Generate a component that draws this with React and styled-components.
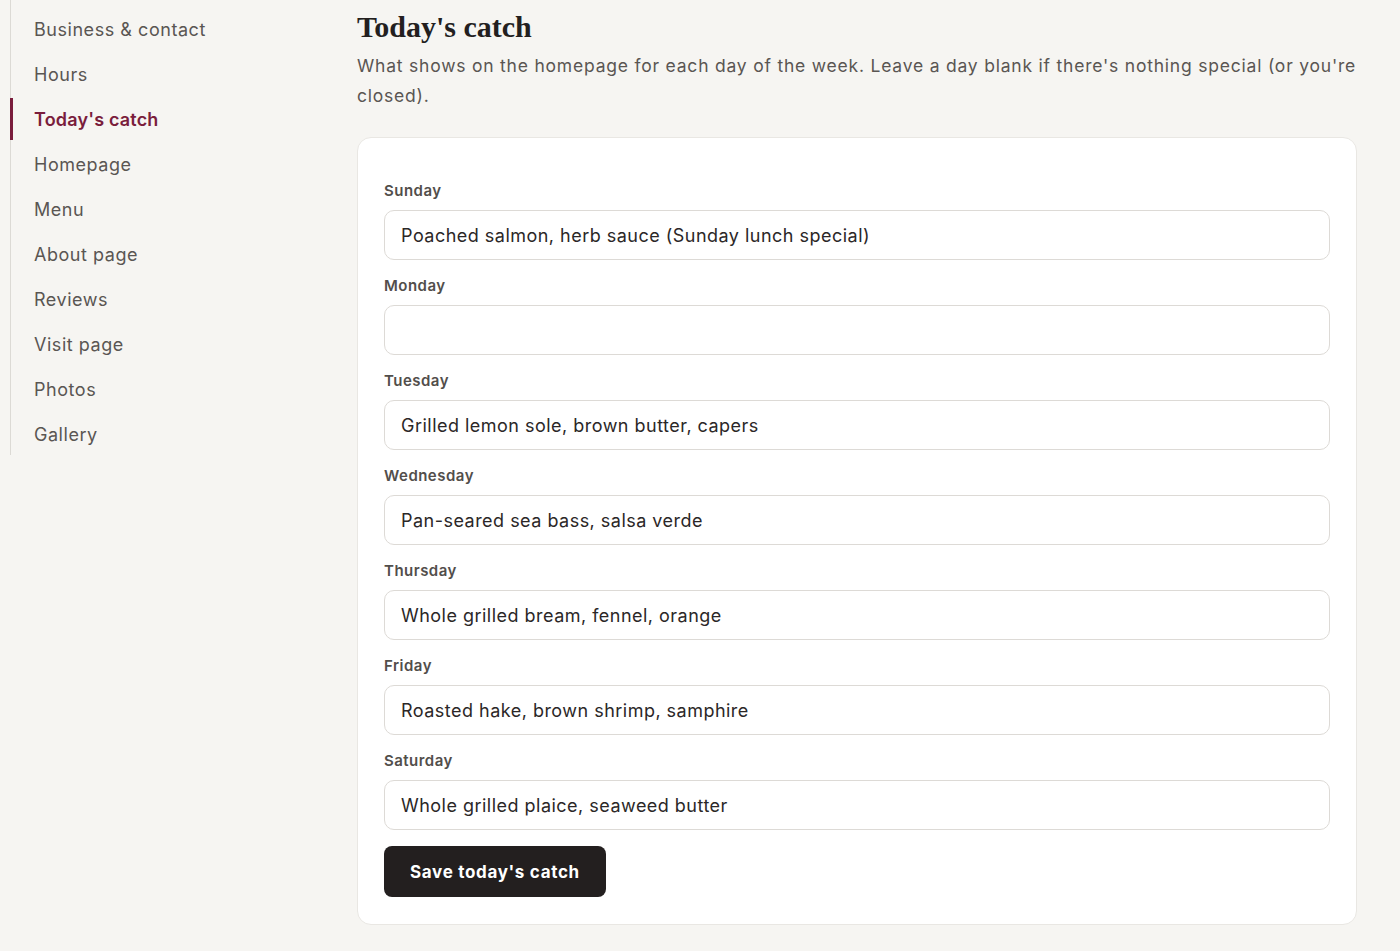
import React from "react";
import styled, { createGlobalStyle } from "styled-components";

const GlobalStyle = createGlobalStyle`
  * { box-sizing: border-box; }
  body {
    margin: 0;
    background: #f6f5f2;
    font-family: Inter, "Open Sans", "Liberation Sans", sans-serif;
    letter-spacing: 0.03em;
    color: #2b2727;
  }
`;

const sections = [
  "Business & contact",
  "Hours",
  "Today's catch",
  "Homepage",
  "Menu",
  "About page",
  "Reviews",
  "Visit page",
  "Photos",
  "Gallery",
];

const days = [
  ["Sunday", "Poached salmon, herb sauce (Sunday lunch special)"],
  ["Monday", ""],
  ["Tuesday", "Grilled lemon sole, brown butter, capers"],
  ["Wednesday", "Pan-seared sea bass, salsa verde"],
  ["Thursday", "Whole grilled bream, fennel, orange"],
  ["Friday", "Roasted hake, brown shrimp, samphire"],
  ["Saturday", "Whole grilled plaice, seaweed butter"],
];

function App() {
  return (
    <>
      <GlobalStyle />
      <Layout>
        <SideNav>
          {sections.map((s) => (
            <NavItem key={s} $active={s === "Today's catch"}>
              {s}
            </NavItem>
          ))}
        </SideNav>
        <Main>
          <Title>Today's catch</Title>
          <Lead>
            What shows on the homepage for each day of the week. Leave a day blank if there's
            nothing special (or you're closed).
          </Lead>
          <Card>
            {days.map(([day, dish]) => (
              <Field key={day}>
                <Label htmlFor={day}>{day}</Label>
                <Input id={day} defaultValue={dish} />
              </Field>
            ))}
            <SaveButton>Save today's catch</SaveButton>
          </Card>
        </Main>
      </Layout>
    </>
  );
}

const Layout = styled.div`
  display: grid;
  grid-template-columns: 300px 1fr;
  column-gap: 47px;
  padding: 0 43px 27px 10px;
  align-items: start;
`;

const SideNav = styled.nav`
  display: flex;
  flex-direction: column;
  gap: 3px;
  padding-top: 8px;
  border-left: 1px solid #dcdad5;
`;

const NavItem = styled.a`
  display: flex;
  align-items: center;
  height: 42px;
  margin-left: -1px;
  padding-left: 21px;
  border-left: 3px solid ${(p) => (p.$active ? "#7a1d3c" : "transparent")};
  font-size: 18px;
  font-weight: ${(p) => (p.$active ? 600 : 400)};
  letter-spacing: ${(p) => (p.$active ? "0.01em" : "0.03em")};
  color: ${(p) => (p.$active ? "#7a1d3c" : "#5a5653")};
  cursor: pointer;
`;

const Main = styled.main`
  display: flex;
  flex-direction: column;
`;

const Title = styled.h1`
  margin: 8px 0 0;
  font-family: "Liberation Serif", "DejaVu Serif", serif;
  font-size: 30px;
  font-weight: 700;
  line-height: 38px;
  letter-spacing: 0;
  color: #231f1f;
`;

const Lead = styled.p`
  margin: 5px 0 26px;
  font-size: 17.5px;
  line-height: 30px;
  letter-spacing: 0.045em;
  color: #5a5653;
`;

const Card = styled.form`
  display: flex;
  flex-direction: column;
  gap: 16px;
  padding: 43px 26px 27px;
  background: #fff;
  border: 1px solid #e9e7e3;
  border-radius: 14px;
`;

const Field = styled.div`
  display: flex;
  flex-direction: column;
  gap: 9px;
`;

const Label = styled.label`
  font-size: 15px;
  font-weight: 600;
  line-height: 20px;
  color: #524e4b;
`;

const Input = styled.input`
  height: 50px;
  padding: 0 16px;
  border: 1px solid #dddad6;
  border-radius: 10px;
  background: #fff;
  font-family: inherit;
  font-size: 18px;
  letter-spacing: inherit;
  color: #2b2727;
  outline: none;
`;

const SaveButton = styled.button`
  align-self: flex-start;
  height: 51px;
  padding: 0 26px;
  border: none;
  border-radius: 8px;
  background: #231f1f;
  color: #fff;
  font-family: inherit;
  font-size: 17px;
  font-weight: 700;
  letter-spacing: 0.04em;
  cursor: pointer;
`;

export default App;
